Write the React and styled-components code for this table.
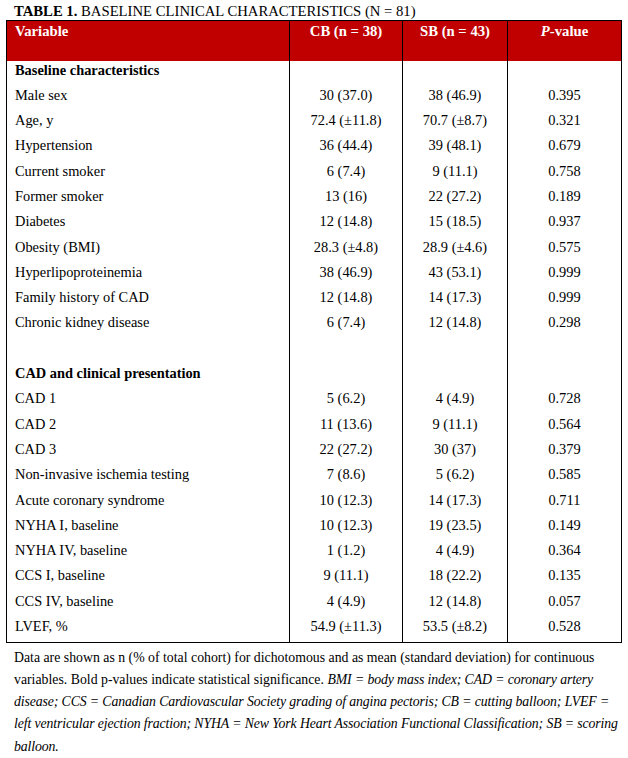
import React from "react";
import styled, { createGlobalStyle } from "styled-components";

const Global = createGlobalStyle`
  html, body { margin: 0; padding: 0; background: #fff; }
  body { font-family: "Liberation Serif", "Times New Roman", serif; color: #000; }
`;

const Page = styled.div`
  padding: 2px 7px 0 6px;
  width: 615px;
`;

const Title = styled.div`
  padding-left: 8px;
  font-size: 14.7px;
  line-height: 18px;
  b { font-weight: bold; }
`;

const Table = styled.table`
  border-collapse: collapse;
  width: 615px;
  table-layout: fixed;
  border: 1px solid #000;
  font-size: 14.4px;
`;

const HeadRow = styled.tr`
  background: #c00000;
  color: #fff;
  height: 40px;
`;

const Th = styled.th`
  vertical-align: top;
  padding: 2px 8px 0;
  line-height: 17px;
  font-weight: bold;
  font-size: 14.7px;
  text-align: ${(p) => (p.$left ? "left" : "center")};
  border-left: ${(p) => (p.$left ? "none" : "1px solid #000")};
`;

const Row = styled.tr`
  height: 25.3px;
`;

const Td = styled.td`
  vertical-align: top;
  padding: 1px 8px 0;
  line-height: 17px;
  text-align: ${(p) => (p.$left ? "left" : "center")};
  border-left: ${(p) => (p.$left ? "none" : "1px solid #000")};
  font-weight: ${(p) => (p.$bold ? "bold" : "normal")};
  white-space: nowrap;
`;

const Note = styled.p`
  margin: 4px -7px 0 0;
  padding: 0 4px 0 8px;
  font-size: 13.8px;
  line-height: 22.2px;
  i {
    font-style: italic;
    letter-spacing: -0.12px;
  }
`;

const sections = [
  {
    title: "Baseline characteristics",
    rows: [
      ["Male sex", "30 (37.0)", "38 (46.9)", "0.395"],
      ["Age, y", "72.4 (±11.8)", "70.7 (±8.7)", "0.321"],
      ["Hypertension", "36 (44.4)", "39 (48.1)", "0.679"],
      ["Current smoker", "6 (7.4)", "9 (11.1)", "0.758"],
      ["Former smoker", "13 (16)", "22 (27.2)", "0.189"],
      ["Diabetes", "12 (14.8)", "15 (18.5)", "0.937"],
      ["Obesity (BMI)", "28.3 (±4.8)", "28.9 (±4.6)", "0.575"],
      ["Hyperlipoproteinemia", "38 (46.9)", "43 (53.1)", "0.999"],
      ["Family history of CAD", "12 (14.8)", "14 (17.3)", "0.999"],
      ["Chronic kidney disease", "6 (7.4)", "12 (14.8)", "0.298"],
      ["", "", "", ""],
    ],
  },
  {
    title: "CAD and clinical presentation",
    rows: [
      ["CAD 1", "5 (6.2)", "4 (4.9)", "0.728"],
      ["CAD 2", "11 (13.6)", "9 (11.1)", "0.564"],
      ["CAD 3", "22 (27.2)", "30 (37)", "0.379"],
      ["Non-invasive ischemia testing", "7 (8.6)", "5 (6.2)", "0.585"],
      ["Acute coronary syndrome", "10 (12.3)", "14 (17.3)", "0.711"],
      ["NYHA I, baseline", "10 (12.3)", "19 (23.5)", "0.149"],
      ["NYHA IV, baseline", "1 (1.2)", "4 (4.9)", "0.364"],
      ["CCS I, baseline", "9 (11.1)", "18 (22.2)", "0.135"],
      ["CCS IV, baseline", "4 (4.9)", "12 (14.8)", "0.057"],
      ["LVEF, %", "54.9 (±11.3)", "53.5 (±8.2)", "0.528"],
    ],
  },
];

export default function App() {
  return (
    <>
      <Global />
      <Page>
        <Title>
          <b>TABLE 1.</b> BASELINE CLINICAL CHARACTERISTICS (N = 81)
        </Title>
        <Table>
          <colgroup>
            <col style={{ width: "283px" }} />
            <col style={{ width: "113px" }} />
            <col style={{ width: "105px" }} />
            <col style={{ width: "114px" }} />
          </colgroup>
          <thead>
            <HeadRow>
              <Th $left>Variable</Th>
              <Th>CB (n = 38)</Th>
              <Th>SB (n = 43)</Th>
              <Th>
                <i>P</i>-value
              </Th>
            </HeadRow>
          </thead>
          <tbody>
            {sections.map((s) => (
              <React.Fragment key={s.title}>
                <Row>
                  <Td $left $bold>{s.title}</Td>
                  <Td />
                  <Td />
                  <Td />
                </Row>
                {s.rows.map((r, i) => (
                  <Row key={i}>
                    <Td $left>{r[0]}</Td>
                    <Td>{r[1]}</Td>
                    <Td>{r[2]}</Td>
                    <Td>{r[3]}</Td>
                  </Row>
                ))}
              </React.Fragment>
            ))}
          </tbody>
        </Table>
        <Note>
          Data are shown as n (% of total cohort) for dichotomous and as mean (standard deviation) for continuous
          variables. Bold p-values indicate statistical significance.{" "}
          <i>
            BMI = body mass index; CAD = coronary artery disease; CCS = Canadian Cardiovascular Society grading of
            angina pectoris; CB = cutting balloon; LVEF = left ventricular ejection fraction; NYHA = New York Heart
            Association Functional Classification; SB = scoring balloon.
          </i>
        </Note>
      </Page>
    </>
  );
}
